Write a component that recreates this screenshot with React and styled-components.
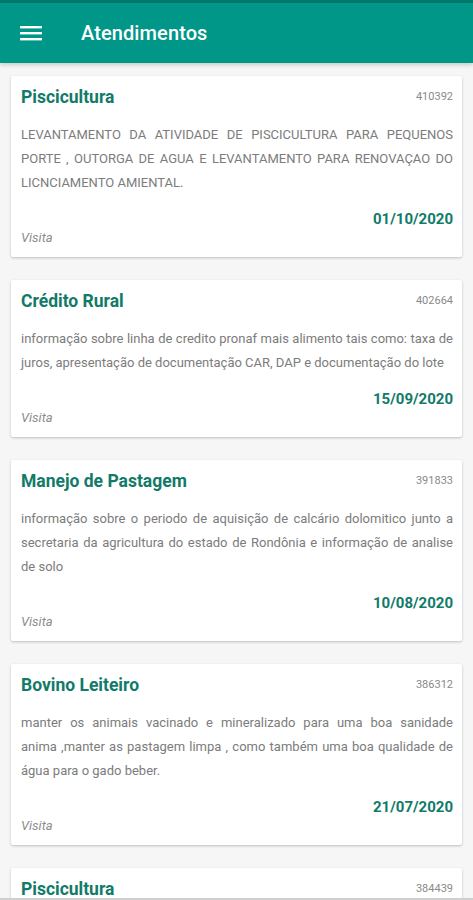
import styled, { createGlobalStyle } from "styled-components";

const GlobalStyle = createGlobalStyle`
  html, body {
    margin: 0;
    padding: 0;
    background: #f6f6f6;
    font-family: Roboto, "Liberation Sans", sans-serif;
  }
`;

const Screen = styled.div`
  width: 473px;
  height: 900px;
  overflow: hidden;
  display: flex;
  flex-direction: column;
  background: #f6f6f6;
  border-bottom: 2px solid #cfcfcf;
  box-sizing: border-box;
`;

const AppBar = styled.header`
  flex: none;
  height: 60px;
  border-top: 3px solid #00796b;
  background: #009688;
  display: flex;
  align-items: center;
  padding-left: 20px;
  gap: 39px;
  box-shadow: 0 2px 4px rgba(0, 0, 0, 0.18);
  position: relative;
  z-index: 1;
`;

const Title = styled.h1`
  margin: 0;
  color: #ffffff;
  font-size: 20px;
  font-weight: 500;
  letter-spacing: 0.1px;
`;

const List = styled.main`
  display: flex;
  flex-direction: column;
  gap: 23px;
  padding: 13px 11px 0 11px;
`;

const Card = styled.article`
  background: #ffffff;
  border-radius: 2px;
  box-shadow: 0 1px 3px rgba(0, 0, 0, 0.16), 0 1px 2px rgba(0, 0, 0, 0.08);
  padding: 10px 9px 10px 10px;
  display: flex;
  flex-direction: column;
`;

const TitleRow = styled.div`
  display: flex;
  justify-content: space-between;
  align-items: flex-start;
  height: 22px;
`;

const Subject = styled.h2`
  margin: 0;
  font-size: 17.5px;
  line-height: 22px;
  font-weight: 700;
  color: #117a68;
`;

const Code = styled.span`
  font-size: 11px;
  line-height: 11px;
  margin-top: 5px;
  color: #8a8a8a;
`;

const Description = styled.p`
  margin: 15px 0 0;
  font-size: 13px;
  line-height: 24px;
  color: #7c7c7c;
  text-align: justify;
`;

const DateText = styled.div`
  margin-top: 14px;
  text-align: right;
  font-size: 15px;
  line-height: 20px;
  font-weight: 700;
  color: #117a68;
`;

const Kind = styled.div`
  font-size: 13px;
  line-height: 18px;
  font-style: italic;
  color: #8c8c8c;
`;

const MenuIcon = () => (
  <svg width="22" height="16" viewBox="0 0 22 16" aria-hidden="true">
    <rect x="0" y="1" width="22" height="2.4" fill="#fff" />
    <rect x="0" y="7" width="22" height="2.4" fill="#fff" />
    <rect x="0" y="13" width="22" height="2.4" fill="#fff" />
  </svg>
);

const visits = [
  {
    id: "410392",
    subject: "Piscicultura",
    text: "LEVANTAMENTO DA ATIVIDADE DE PISCICULTURA PARA PEQUENOS PORTE , OUTORGA DE AGUA E LEVANTAMENTO PARA RENOVAÇAO DO LICNCIAMENTO AMIENTAL.",
    date: "01/10/2020",
  },
  {
    id: "402664",
    subject: "Crédito Rural",
    text: "informação sobre linha de credito pronaf mais alimento tais como: taxa de juros, apresentação de documentação CAR, DAP  e documentação do lote",
    date: "15/09/2020",
  },
  {
    id: "391833",
    subject: "Manejo de Pastagem",
    text: "informação sobre o periodo de aquisição de calcário dolomitico junto a secretaria da agricultura do estado de Rondônia e informação de analise de solo",
    date: "10/08/2020",
  },
  {
    id: "386312",
    subject: "Bovino Leiteiro",
    text: "manter os animais vacinado e mineralizado para uma boa sanidade anima\u00a0,manter as pastagem limpa , como também uma boa qualidade de água para o gado beber.",
    date: "21/07/2020",
  },
  {
    id: "384439",
    subject: "Piscicultura",
    text: "LEVANTAMENTO DA ATIVIDADE DE PISCICULTURA PARA PEQUENOS PORTE.",
    date: "15/07/2020",
  },
];

const App = () => (
  <Screen>
    <GlobalStyle />
    <AppBar>
      <MenuIcon />
      <Title>Atendimentos</Title>
    </AppBar>
    <List>
      {visits.map((v) => (
        <Card key={v.id}>
          <TitleRow>
            <Subject>{v.subject}</Subject>
            <Code>{v.id}</Code>
          </TitleRow>
          <Description>{v.text}</Description>
          <DateText>{v.date}</DateText>
          <Kind>Visita</Kind>
        </Card>
      ))}
    </List>
  </Screen>
);

export default App;
